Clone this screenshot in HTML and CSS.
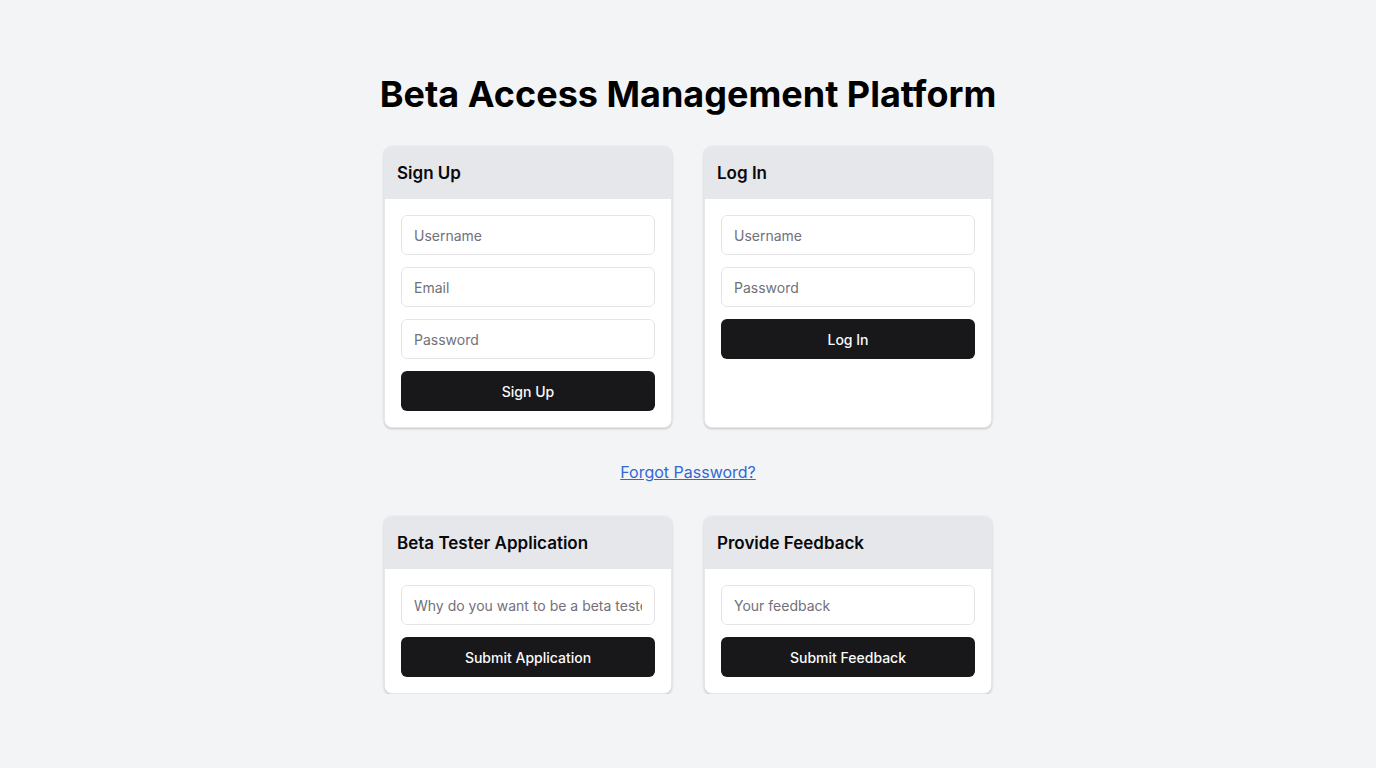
FILE: index.html
```html
<!DOCTYPE html>
<html lang="en">
<head>
<meta charset="utf-8">
<title>Beta Access Management Platform</title>
<link rel="stylesheet" href="styles.css">
</head>
<body>
<main class="page">
  <h1 class="title">Beta Access Management Platform</h1>
  <div class="grid">
    <section class="card">
      <div class="card-header"><h2>Sign Up</h2></div>
      <div class="card-body">
        <input class="input" type="text" placeholder="Username">
        <input class="input" type="email" placeholder="Email">
        <input class="input" type="password" placeholder="Password">
        <button class="btn">Sign Up</button>
      </div>
    </section>
    <section class="card">
      <div class="card-header"><h2>Log In</h2></div>
      <div class="card-body">
        <input class="input" type="text" placeholder="Username">
        <input class="input" type="password" placeholder="Password">
        <button class="btn">Log In</button>
      </div>
    </section>
  </div>
  <div class="forgot"><a href="#">Forgot Password?</a></div>
  <div class="grid">
    <section class="card">
      <div class="card-header"><h2>Beta Tester Application</h2></div>
      <div class="card-body">
        <input class="input" type="text" placeholder="Why do you want to be a beta tester?">
        <button class="btn">Submit Application</button>
      </div>
    </section>
    <section class="card">
      <div class="card-header"><h2>Provide Feedback</h2></div>
      <div class="card-body">
        <input class="input" type="text" placeholder="Your feedback">
        <button class="btn">Submit Feedback</button>
      </div>
    </section>
  </div>
</main>
</body>
</html>
```
FILE: styles.css
```css
* { box-sizing: border-box; }
html, body { margin: 0; padding: 0; }
body {
  background: #f3f4f6;
  font-family: Inter, "Noto Sans", sans-serif;
  color: #09090b;
}
.page {
  padding-top: 74px;
  display: flex;
  flex-direction: column;
  align-items: center;
}
.title {
  margin: 0 0 32px;
  font-size: 36px;
  line-height: 40px;
  font-weight: 700;
  text-align: center;
  white-space: nowrap;
  color: #000;
}
.grid {
  width: 608px;
  display: grid;
  grid-template-columns: 1fr 1fr;
  gap: 32px;
}
.card {
  background: #fff;
  border: 1px solid #e5e7eb;
  border-radius: 8px;
  box-shadow: 0 1px 3px rgba(0,0,0,0.12), 0 1px 2px rgba(0,0,0,0.08);
  overflow: hidden;
  display: flex;
  flex-direction: column;
}
.card-header {
  background: #e5e7eb;
  padding: 12px;
}
.card-header h2 {
  margin: 0;
  font-size: 17px;
  line-height: 28px;
  font-weight: 600;
  color: #09090b;
}
.card-body {
  padding: 16px;
  display: flex;
  flex-direction: column;
  gap: 12px;
}
.input {
  height: 40px;
  width: 100%;
  border: 1px solid #e4e4e7;
  border-radius: 6px;
  padding: 0 12px;
  font-family: inherit;
  font-size: 14px;
  color: #09090b;
  background: #fff;
  outline: none;
}
.input::placeholder { color: #71717a; }
.btn {
  height: 40px;
  width: 100%;
  border: none;
  border-radius: 6px;
  background: #18181b;
  color: #fafafa;
  font-family: inherit;
  font-size: 14px;
  font-weight: 500;
  cursor: pointer;
}
.forgot {
  text-align: center;
  margin: 32px 0 32px;
  font-size: 16px;
  line-height: 24px;
}
.forgot a {
  color: #3268d2;
  text-decoration: underline;
}
```
